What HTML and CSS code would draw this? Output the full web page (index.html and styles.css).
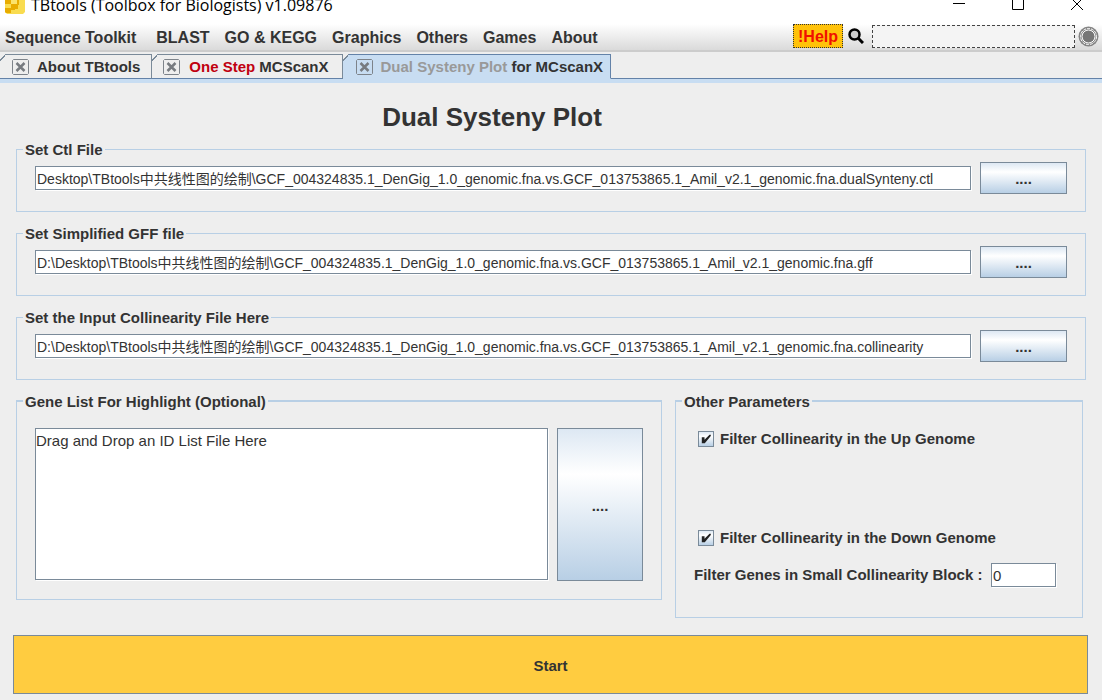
FILE: index.html
```html
<!DOCTYPE html>
<html lang="en">
<head>
<meta charset="utf-8">
<title>TBtools</title>
<link rel="stylesheet" href="styles.css">
</head>
<body>
<header class="titlebar">
  <svg class="logo" width="20" height="14" viewBox="0 0 20 14" aria-hidden="true">
    <path fill="#f9dc50" d="M0 0h20v12l-2 2H2l-2-2z"/>
    <path fill="#e8ac00" d="M0 0h6v4H0zM6 4h7v5H6zM12 0h2v5h-2zM0 8h10v2H6v3H1l-1-1z"/>
    <path fill="#fbe36a" d="M6 0h6v4H6z"/>
  </svg>
  <span class="app-name">TBtools (Toolbox for Biologists) v1.09876</span>
  <div class="window-controls">
    <button aria-label="Minimize"><svg width="14" height="12" viewBox="0 0 14 12"><path d="M1 3.500h12"/></svg></button>
    <button aria-label="Maximize"><svg width="14" height="12" viewBox="0 0 14 12"><path d="M1.500 -2V9.500H12.500V-2"/></svg></button>
    <button aria-label="Close"><svg width="14" height="12" viewBox="0 0 14 12"><path d="M1 10L13 -2M13 10L1 -2"/></svg></button>
  </div>
</header>

<nav class="menubar">
  <button class="menu menu-first">Sequence Toolkit</button>
  <button class="menu">BLAST</button>
  <button class="menu">GO &amp; KEGG</button>
  <button class="menu">Graphics</button>
  <button class="menu">Others</button>
  <button class="menu">Games</button>
  <button class="menu">About</button>
  <div class="tools">
    <button class="help">!Help</button>
    <svg class="search-icon" width="16" height="16" viewBox="0 0 16 16" aria-hidden="true">
      <circle cx="6.500" cy="6.500" r="5" fill="#ccc" stroke="#000" stroke-width="2.500"/>
      <path d="M10 10l5 5" stroke="#000" stroke-width="3"/>
    </svg>
    <input class="search" type="text" aria-label="Search">
    <svg class="memory" width="21" height="21" viewBox="0 0 21 21" aria-hidden="true">
      <circle cx="10.500" cy="10.500" r="10" fill="#858585"/>
      <circle cx="10.500" cy="10.500" r="8" fill="none" stroke="#fff" stroke-dasharray="3 1"/>
      <circle cx="10.500" cy="10.500" r="6.500" fill="#777" stroke="#fff"/>
    </svg>
  </div>
</nav>

<div class="tabs">
  <div class="tab tab-first">
    <button class="close" aria-label="Close tab"><svg width="17" height="16" viewBox="0 0 17 16"><path class="box" d="M1.500 .5h14l1 1v13l-1 1h-14l-1-1v-13z"/><path class="cross" d="M4.500 4l8 8M12.500 4l-8 8"/></svg></button>
    <span>About TBtools</span>
  </div>
  <div class="tab">
    <button class="close" aria-label="Close tab"><svg width="17" height="16" viewBox="0 0 17 16"><path class="box" d="M1.500 .5h14l1 1v13l-1 1h-14l-1-1v-13z"/><path class="cross" d="M4.500 4l8 8M12.500 4l-8 8"/></svg></button>
    <span><span class="red">One Step</span> MCScanX</span>
  </div>
  <div class="tab active">
    <button class="close" aria-label="Close tab"><svg width="17" height="16" viewBox="0 0 17 16"><path class="box" d="M1.500 .5h14l1 1v13l-1 1h-14l-1-1v-13z"/><path class="cross" d="M4.500 4l8 8M12.500 4l-8 8"/></svg></button>
    <span><span class="gray">Dual Systeny Plot</span> for MCscanX</span>
  </div>
</div>

<main>
  <h1>Dual Systeny Plot</h1>
  <fieldset class="group">
    <legend><label for="ctl">Set Ctl File</label></legend>
    <div class="file-row">
      <input class="field" id="ctl" type="text" value="Desktop\TBtools中共线性图的绘制\GCF_004324835.1_DenGig_1.0_genomic.fna.vs.GCF_013753865.1_Amil_v2.1_genomic.fna.dualSynteny.ctl">
      <button class="metal">....</button>
    </div>
  </fieldset>
  <fieldset class="group">
    <legend><label for="gff">Set Simplified GFF file</label></legend>
    <div class="file-row">
      <input class="field" id="gff" type="text" value="D:\Desktop\TBtools中共线性图的绘制\GCF_004324835.1_DenGig_1.0_genomic.fna.vs.GCF_013753865.1_Amil_v2.1_genomic.fna.gff">
      <button class="metal">....</button>
    </div>
  </fieldset>
  <fieldset class="group">
    <legend><label for="col">Set the Input Collinearity File Here</label></legend>
    <div class="file-row">
      <input class="field" id="col" type="text" value="D:\Desktop\TBtools中共线性图的绘制\GCF_004324835.1_DenGig_1.0_genomic.fna.vs.GCF_013753865.1_Amil_v2.1_genomic.fna.collinearity">
      <button class="metal">....</button>
    </div>
  </fieldset>

  <div class="columns">
    <fieldset class="group genes">
      <legend><label for="genes">Gene List For Highlight (Optional)</label></legend>
      <div class="genes-row">
        <textarea class="field" id="genes">Drag and Drop an ID List File Here</textarea>
        <button class="metal">....</button>
      </div>
    </fieldset>
    <fieldset class="group params">
      <legend>Other Parameters</legend>
      <div class="params-list">
        <label class="check"><input type="checkbox" checked>Filter Collinearity in the Up Genome</label>
        <label class="check"><input type="checkbox" checked>Filter Collinearity in the Down Genome</label>
        <div class="block-row">
          <label for="block">Filter Genes in Small Collinearity Block :</label>
          <input class="field" id="block" type="text" value="0">
        </div>
      </div>
    </fieldset>
  </div>
  <button class="start">Start</button>
</main>
</body>
</html>
```

FILE: styles.css
```css
* { box-sizing: border-box; }

body {
  margin: 0;
  background: #eee;
  color: #333;
  font: bold 15px/18px "Liberation Sans", "Noto Sans CJK SC", sans-serif;
}

button {
  margin: 0;
  padding: 0;
  border: 0;
  background: none;
  color: inherit;
  font: inherit;
}

svg { display: block; }

.titlebar {
  display: flex;
  align-items: flex-start;
  height: 24px;
  padding: 0 18px 0 5px;
  background: #fff;
  color: #000;
}
.app-name {
  margin-left: 6px;
  font: 16px/10px "Open Sans", "Noto Sans", sans-serif;
}
.window-controls {
  display: flex;
  gap: 45px;
  margin-left: auto;
}
.window-controls svg { fill: none; stroke: #000; }

.menubar {
  display: flex;
  align-items: center;
  gap: 15px;
  height: 28px;
  padding: 2px 3px 0 5px;
  border-bottom: 2px solid #ccc;
  background: linear-gradient(#fff, #dadada);
  font-size: 16px;
}
.menu-first { margin-right: 5px; }
.tools {
  display: flex;
  align-items: center;
  margin: 0 0 4px auto;
}
.help {
  width: 50px;
  height: 24px;
  padding-top: 2px;
  border: 1px dotted #333;
  background: #ffc20a;
  color: #f01000;
}
.search-icon { margin: 0 8px 0 5px; }
.search {
  width: 203px;
  height: 23px;
  border: 1px dashed #444;
  background: #f4f4f4;
}
.memory { margin-left: 3px; }

.tabs {
  display: flex;
  padding-top: 2px;
  border-bottom: 4px solid #c8ddf2;
  box-shadow: inset 0 -1px #6382a8;
}
.tab {
  position: relative;
  display: flex;
  align-items: center;
  gap: 9px;
  height: 25px;
  padding: 0 13px 0 11px;
  border: 1px solid #7a8a99;
  border-width: 1px 1px 1px 0;
  border-bottom-color: #6382a8;
}
.tab::before {
  content: "";
  position: absolute;
  top: -1px;
  left: 0;
  width: 6px;
  height: 7px;
  background: linear-gradient(to bottom right, #eee 43%, #7a8a99 43% 56%, transparent 56%);
}
.tab-first {
  gap: 8px;
  padding: 0 11px 0 12px;
}
.active {
  gap: 8px;
  padding: 0 7px 0 13px;
  border-color: #6382a8;
  border-bottom-color: #c8ddf2;
  background: #c8ddf2;
}
.close .box { fill: none; stroke: #7d838a; }
.close .cross { stroke: #777b80; stroke-width: 2.5; }
.red { color: #c00010; }
.gray { color: #999; }

main {
  display: flex;
  flex-direction: column;
  gap: 13px;
  padding: 19px 16px 6px;
}
h1 {
  margin: 0 0 -4px;
  padding-right: 118px;
  font-size: 26px;
  line-height: 30px;
  text-align: center;
}

.group {
  min-width: 0;
  margin: 0;
  padding: 5px 18px 17px;
  border: 1px solid #b8cfe5;
}
legend {
  margin-left: -12px;
  padding: 2px 2px 0;
  line-height: 14px;
}
.file-row {
  display: flex;
  align-items: center;
  gap: 9px;
}
.field {
  min-width: 0;
  height: 24px;
  padding: 0 1px;
  border: 1px solid #7a8a99;
  border-radius: 0;
  outline: 0;
  background: #fff;
  box-shadow: 1px 1px #fff;
  color: #333;
  font: 15px/18px "Liberation Sans", "Noto Sans CJK SC", sans-serif;
}
.file-row .field {
  flex: 1;
  font-size: 14px;
}
.metal {
  width: 87px;
  height: 32px;
  padding-top: 2px;
  border: 1px solid #7a8a99;
  background: linear-gradient(#dde8f3, #fff 30%, #b8cfe5);
}

.columns {
  display: flex;
  align-items: flex-start;
  gap: 13px;
  margin: 0 3px 4px 0;
}
.genes {
  flex: 1;
  padding: 19px 18px 18px;
  border-top-width: 2px;
}
.genes-row {
  display: flex;
  gap: 9px;
}
.genes-row .field {
  flex: 1;
  height: 152px;
  padding: 3px 0;
  resize: none;
}
.genes-row .metal {
  width: 86px;
  height: 153px;
}
.params {
  width: 408px;
  padding: 20px 18px 30px;
  border-top-width: 2px;
}
.params-list {
  display: flex;
  flex-direction: column;
}
.check {
  display: flex;
  align-items: center;
  gap: 6px;
  height: 20px;
  margin: 0 0 79px 4px;
}
.check + .check { margin-bottom: 15px; }
.check input {
  position: relative;
  width: 16px;
  height: 16px;
  margin: 0;
  appearance: none;
  border: 1px solid #7a8a99;
  background: linear-gradient(#dde8f3, #fff 30%, #b8cfe5);
}
.check input:checked::before {
  content: "";
  position: absolute;
  inset: 2px;
  background: #222;
  clip-path: polygon(8% 33%, 35% 33%, 35% 58%, 85% 8%, 98% 8%, 98% 20%, 38% 92%, 8% 92%);
}
.block-row {
  display: flex;
  align-items: center;
  justify-content: space-between;
  padding-right: 8px;
}
.block-row .field { width: 65px; }

.start {
  height: 59px;
  margin: 0 -2px 0 -3px;
  padding-top: 2px;
  border: 1px solid #7a8a99;
  background: #ffcc40;
}
```
